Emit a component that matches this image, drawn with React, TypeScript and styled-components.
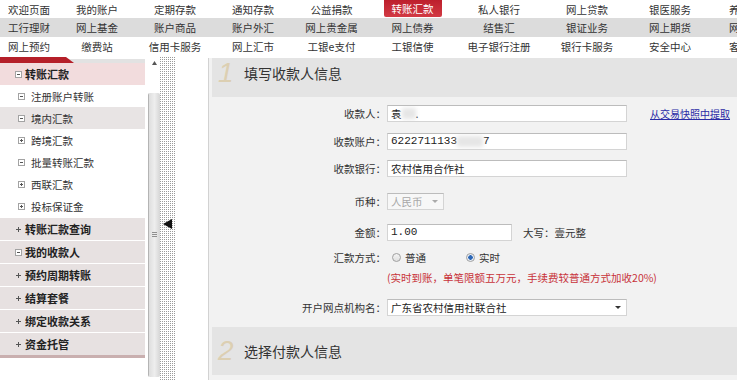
import React from "react";
import styled, { createGlobalStyle } from "styled-components";

const GlobalStyle = createGlobalStyle`
  html, body {
    margin: 0;
    padding: 0;
    background: #fff;
  }
  body {
    font-family: "Noto Sans CJK SC", "Noto Sans", sans-serif;
    font-size: 10.5px;
    color: #333;
  }
`;

const Page = styled.div`
  width: 737px;
  height: 380px;
  overflow: hidden;
  display: flex;
  flex-direction: column;
`;

/* ---------- top navigation ---------- */

const TopNav = styled.div`
  flex: none;
`;

const NavRow = styled.div<{ $gray?: boolean; $h: number }>`
  display: grid;
  grid-template-columns: 58px 78px 78px 78px 79px 83px 90px 86px 80px 80px;
  width: 790px;
  height: ${(p) => p.$h}px;
  background: ${(p) => (p.$gray ? "#dcdcdc" : "#fff")};
`;

const NavItem = styled.div`
  display: flex;
  align-items: center;
  justify-content: center;
  white-space: nowrap;
  color: #333;
  font-size: 10.5px;
`;

const ActiveTab = styled.span`
  align-self: flex-start;
  height: 17px;
  line-height: 17px;
  padding: 0 8px;
  color: #fff;
  background: linear-gradient(#bd1f2c, #d23a44);
  border-radius: 0 0 2px 2px;
`;

/* ---------- body ---------- */

const Body = styled.div`
  flex: 1;
  display: flex;
  padding-top: 1px;
  min-height: 0;
`;

const Sidebar = styled.div`
  width: 145px;
  margin-right: 3px;
  flex: none;
  display: flex;
  flex-direction: column;
`;

const SideTop = styled.div`
  height: 6px;
  display: flex;
  background: linear-gradient(#fff 0 2px, #e2e2e2 2px);
`;

const SideTopRed = styled.div`
  width: 74px;
  background: #b51f29;
  clip-path: polygon(0 0, 66px 0, 74px 100%, 0 100%);
`;

const Toggle = styled.span<{ $kind: "boxMinus" | "boxPlus" | "plus" }>`
  position: relative;
  flex: none;
  width: 7px;
  height: 7px;
  box-sizing: border-box;
  border: ${(p) => (p.$kind === "plus" ? "none" : "1px solid #a3a3a3")};
  background: ${(p) => (p.$kind === "plus" ? "transparent" : "#fff")};

  &::before {
    content: "";
    position: absolute;
    left: 1px;
    right: 1px;
    top: 50%;
    height: 1px;
    margin-top: -0.5px;
    background: #555;
  }

  &::after {
    content: "";
    display: ${(p) => (p.$kind === "boxMinus" ? "none" : "block")};
    position: absolute;
    top: 1px;
    bottom: 1px;
    left: 50%;
    width: 1px;
    margin-left: -0.5px;
    background: #555;
  }
`;

const MenuHead = styled.div`
  height: 22px;
  display: flex;
  align-items: center;
  gap: 3px;
  padding-left: 15px;
  background: #f2dcdd;
  font-size: 11px;
  font-weight: bold;
  color: #222;
`;

const SubItem = styled.div<{ $active?: boolean }>`
  height: 22px;
  display: flex;
  align-items: center;
  gap: 6px;
  padding-left: 18px;
  background: ${(p) => (p.$active ? "#e8e4e4" : "#fff")};
  color: #333;
`;

const GroupItem = styled.div`
  height: 22px;
  display: flex;
  align-items: center;
  gap: 3px;
  padding-left: 15px;
  border-top: 1px solid #fff;
  background: #e7e1e1;
  font-size: 11px;
  font-weight: bold;
  color: #222;
`;

const SideBottom = styled.div`
  height: 3px;
  background: #c9afaf;
`;

/* ---------- scrollbar + splitter ---------- */

const ScrollBar = styled.div`
  width: 12px;
  flex: none;
  display: flex;
  flex-direction: column;
`;

const ScrollTop = styled.div`
  height: 36px;
  display: flex;
  justify-content: center;
  padding-top: 4px;
  box-sizing: border-box;
`;

const Thumb = styled.div`
  flex: 1;
  margin-bottom: 3px;
  display: flex;
  align-items: center;
  justify-content: center;
  background: linear-gradient(90deg, #b4b4b4 0, #b4b4b4 1px, #dedede 1px, #eeeeee 55%, #d6d6d6 100%);
  border-radius: 2px;
`;

const Grip = styled.div`
  width: 5px;
  height: 6px;
  background: repeating-linear-gradient(#8f8f8f 0 1px, transparent 1px 2px);
`;

const Splitter = styled.div`
  width: 15px;
  flex: none;
  display: flex;
  align-items: flex-start;
  justify-content: flex-start;
  padding: 162px 0 0 3px;
  box-sizing: border-box;
  background-color: #9a9a9a;
  background-image: linear-gradient(90deg, transparent 1px, #fff 1px),
    linear-gradient(transparent 1px, #fff 1px);
  background-size: 2px 2px;
`;

/* ---------- content ---------- */

const ContentFrame = styled.div`
  flex: 1;
  display: flex;
  padding-left: 33px;
  min-width: 0;
`;

const Panel = styled.div`
  flex: 1;
  margin-top: 1px;
  border-left: 1px solid #d2d2d2;
  background: #f2f2f2;
  display: flex;
  flex-direction: column;
  overflow: hidden;
`;

const SectionHead = styled.div<{ $h: number; $pb?: number; $mt?: number }>`
  flex: none;
  height: ${(p) => p.$h}px;
  margin: ${(p) => p.$mt ?? 0}px 0 0 3px;
  padding: 0 0 ${(p) => p.$pb ?? 0}px 6px;
  box-sizing: border-box;
  display: flex;
  align-items: center;
  background: #e4e4e4;
`;

const StepNum = styled.span`
  width: 26px;
  font-family: "Liberation Sans", Arial, sans-serif;
  font-style: italic;
  font-size: 28px;
  line-height: 1;
  color: #dccfb2;
`;

const StepTitle = styled.span`
  font-size: 14px;
  color: #333;
`;

const FormBody = styled.div`
  padding-top: 2px;
  display: flex;
  flex-direction: column;
`;

const FormRow = styled.div<{ $h: number; $mt?: number }>`
  display: grid;
  grid-template-columns: 178px 1fr;
  align-items: center;
  height: ${(p) => p.$h}px;
  margin-top: ${(p) => p.$mt ?? 0}px;
`;

const Label = styled.div`
  text-align: right;
  padding-right: 1px;
  color: #333;
  white-space: nowrap;
`;

const FieldLine = styled.div`
  display: flex;
  align-items: center;
`;

const Field = styled.div<{ $w: number; $mono?: boolean }>`
  width: ${(p) => p.$w}px;
  height: 17px;
  box-sizing: border-box;
  border: 1px solid #d4d4d4;
  border-top-color: #bcbcbc;
  background: #fff;
  padding: 0 3px;
  display: flex;
  align-items: center;
  white-space: nowrap;
  overflow: hidden;
  font-family: ${(p) =>
    p.$mono ? '"Liberation Mono", "Noto Sans CJK SC", monospace' : "inherit"};
  font-size: ${(p) => (p.$mono ? "11px" : "10.5px")};
  color: #222;
`;

const Blur = styled.span<{ $w: number }>`
  display: inline-block;
  width: ${(p) => p.$w}px;
  height: 11px;
  background: #e6e6e6;
  filter: blur(2px);
`;

const Select = styled(Field)<{ $disabled?: boolean }>`
  position: relative;
  background: ${(p) => (p.$disabled ? "#f7f7f7" : "#fff")};
  color: ${(p) => (p.$disabled ? "#a8a8a8" : "#222")};

  &::after {
    content: "";
    position: absolute;
    right: 5px;
    top: 6px;
    border-left: 3px solid transparent;
    border-right: 3px solid transparent;
    border-top: 3px solid ${(p) => (p.$disabled ? "#aaa" : "#333")};
  }
`;

const Link = styled.a`
  margin-left: 23px;
  font-size: 10px;
  color: #2b2ba6;
  text-decoration: underline;
  white-space: nowrap;
`;

const Hint = styled.span`
  margin-left: 11px;
  color: #333;
`;

const Radio = styled.label`
  display: flex;
  align-items: center;
  gap: 4px;
  margin-left: 5px;
  margin-right: 35px;
  color: #333;
`;

const RadioDot = styled.span<{ $checked?: boolean }>`
  width: 9px;
  height: 9px;
  box-sizing: border-box;
  border-radius: 50%;
  border: 1px solid #a0a0a0;
  background: ${(p) =>
    p.$checked
      ? "radial-gradient(circle, #2d67b5 0 2px, #e8eef6 2.5px)"
      : "linear-gradient(#f4f4f4, #e0e0e0)"};
`;

const Note = styled.div`
  grid-column: 2;
  color: #c8323a;
  white-space: nowrap;
`;

const navRows: string[][] = [
  ["欢迎页面", "我的账户", "定期存款", "通知存款", "公益捐款", "转账汇款", "私人银行", "网上贷款", "银医服务", "养老金融"],
  ["工行理财", "网上基金", "账户商品", "账户外汇", "网上贵金属", "网上债券", "结售汇", "银证业务", "网上期货", "网上保险"],
  ["网上预约", "缴费站", "信用卡服务", "网上汇市", "工银e支付", "工银信使", "电子银行注册", "银行卡服务", "安全中心", "客户服务"],
];

const subItems: { label: string; open: boolean; active?: boolean }[] = [
  { label: "注册账户转账", open: true },
  { label: "境内汇款", open: true, active: true },
  { label: "跨境汇款", open: false },
  { label: "批量转账汇款", open: true },
  { label: "西联汇款", open: false },
  { label: "投标保证金", open: false },
];

const groups: { label: string; open?: boolean }[] = [
  { label: "转账汇款查询" },
  { label: "我的收款人", open: true },
  { label: "预约周期转账" },
  { label: "结算套餐" },
  { label: "绑定收款关系" },
  { label: "资金托管" },
];

export default function App(): JSX.Element {
  return (
    <Page>
      <GlobalStyle />
      <TopNav>
        {navRows.map((row, i) => (
          <NavRow key={i} $gray={i === 1} $h={i === 0 ? 18 : 19}>
            {row.map((label) => (
              <NavItem key={label}>
                {label === "转账汇款" ? <ActiveTab>{label}</ActiveTab> : label}
              </NavItem>
            ))}
          </NavRow>
        ))}
      </TopNav>

      <Body>
        <Sidebar>
          <SideTop>
            <SideTopRed />
          </SideTop>
          <MenuHead>
            <Toggle $kind="boxMinus" />
            转账汇款
          </MenuHead>
          {subItems.map((item) => (
            <SubItem key={item.label} $active={item.active}>
              <Toggle $kind={item.open ? "boxMinus" : "boxPlus"} />
              {item.label}
            </SubItem>
          ))}
          {groups.map((g) => (
            <GroupItem key={g.label}>
              <Toggle $kind={g.open ? "boxMinus" : "plus"} />
              {g.label}
            </GroupItem>
          ))}
          <SideBottom />
        </Sidebar>

        <ScrollBar>
          <ScrollTop>
            <svg width="5" height="4" viewBox="0 0 5 4">
              <polygon points="2.5,0 5,4 0,4" fill="#555" />
            </svg>
          </ScrollTop>
          <Thumb>
            <Grip />
          </Thumb>
        </ScrollBar>

        <Splitter>
          <svg width="9" height="10" viewBox="0 0 9 10">
            <polygon points="0,5 9,0 9,10" fill="#111" />
          </svg>
        </Splitter>

        <ContentFrame>
          <Panel>
            <SectionHead $h={39} $pb={9}>
              <StepNum>1</StepNum>
              <StepTitle>填写收款人信息</StepTitle>
            </SectionHead>

            <FormBody>
              <FormRow $h={28}>
                <Label>收款人：</Label>
                <FieldLine>
                  <Field $w={240}>
                    袁<Blur $w={14} />.
                  </Field>
                  <Link>从交易快照中提取</Link>
                </FieldLine>
              </FormRow>
              <FormRow $h={28}>
                <Label>收款账户：</Label>
                <FieldLine>
                  <Field $w={240} $mono>
                    6222711133<Blur $w={26} />7
                  </Field>
                </FieldLine>
              </FormRow>
              <FormRow $h={27}>
                <Label>收款银行：</Label>
                <FieldLine>
                  <Field $w={240}>农村信用合作社</Field>
                </FieldLine>
              </FormRow>
              <FormRow $h={38}>
                <Label>币种：</Label>
                <FieldLine>
                  <Select $w={57} $disabled>
                    人民币
                  </Select>
                </FieldLine>
              </FormRow>
              <FormRow $h={24}>
                <Label>金额：</Label>
                <FieldLine>
                  <Field $w={125} $mono>
                    1.00
                  </Field>
                  <Hint>大写：壹元整</Hint>
                </FieldLine>
              </FormRow>
              <FormRow $h={26}>
                <Label>汇款方式：</Label>
                <FieldLine>
                  <Radio>
                    <RadioDot />
                    普通
                  </Radio>
                  <Radio>
                    <RadioDot $checked />
                    实时
                  </Radio>
                </FieldLine>
              </FormRow>
              <FormRow $h={14}>
                <Note>(实时到账，单笔限额五万元，手续费较普通方式加收20%)</Note>
              </FormRow>
              <FormRow $h={34} $mt={6}>
                <Label>开户网点机构名：</Label>
                <FieldLine>
                  <Select $w={240}>广东省农村信用社联合社</Select>
                </FieldLine>
              </FormRow>
            </FormBody>

            <SectionHead $h={48} $mt={3}>
              <StepNum>2</StepNum>
              <StepTitle>选择付款人信息</StepTitle>
            </SectionHead>
          </Panel>
        </ContentFrame>
      </Body>
    </Page>
  );
}
